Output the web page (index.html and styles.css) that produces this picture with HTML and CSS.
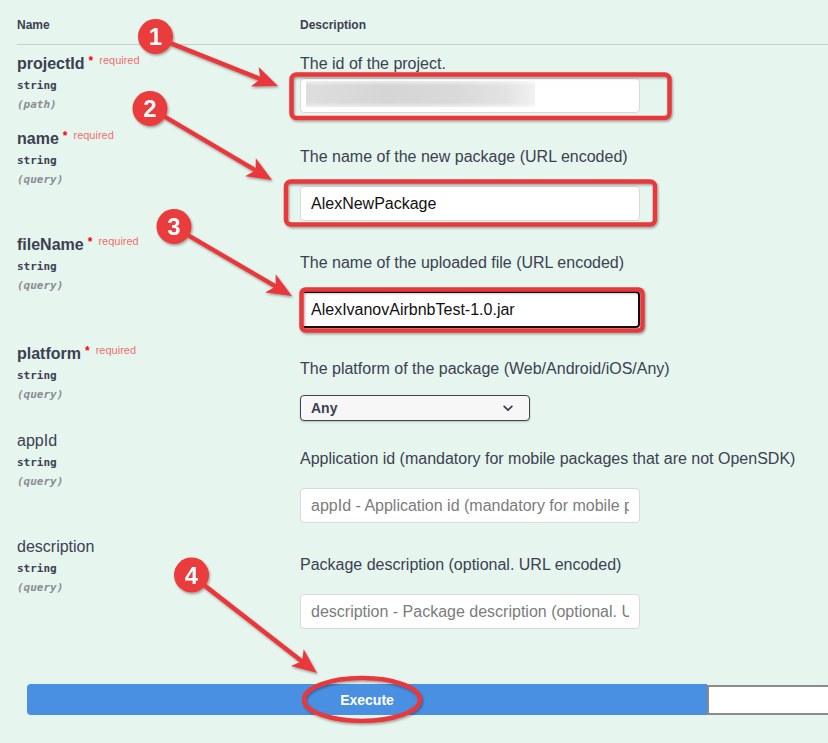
FILE: index.html
```html
<!DOCTYPE html>
<html lang="en">
<head>
<meta charset="utf-8">
<title>Parameters</title>
<link rel="stylesheet" href="styles.css">
</head>
<body>
<div class="page">
  <div class="params">
    <div class="thead">
      <div>Name</div>
      <div>Description</div>
    </div>

    <div class="row row--first">
      <div class="pname">
        <div class="title">projectId<span class="star">*</span><span class="reqtxt">required</span></div>
        <div class="type">string</div>
        <div class="in">(path)</div>
      </div>
      <div class="pdesc">
        <p>The id of the project.</p>
        <input class="field field--blurred" type="text" value="">
      </div>
    </div>

    <div class="row">
      <div class="pname">
        <div class="title">name<span class="star">*</span><span class="reqtxt">required</span></div>
        <div class="type">string</div>
        <div class="in">(query)</div>
      </div>
      <div class="pdesc">
        <p>The name of the new package (URL encoded)</p>
        <input class="field" type="text" value="AlexNewPackage">
      </div>
    </div>

    <div class="row row--focus">
      <div class="pname">
        <div class="title">fileName<span class="star">*</span><span class="reqtxt">required</span></div>
        <div class="type">string</div>
        <div class="in">(query)</div>
      </div>
      <div class="pdesc">
        <p>The name of the uploaded file (URL encoded)</p>
        <input class="field field--focus" type="text" value="AlexIvanovAirbnbTest-1.0.jar">
      </div>
    </div>

    <div class="row row--select">
      <div class="pname">
        <div class="title">platform<span class="star">*</span><span class="reqtxt">required</span></div>
        <div class="type">string</div>
        <div class="in">(query)</div>
      </div>
      <div class="pdesc">
        <p>The platform of the package (Web/Android/iOS/Any)</p>
        <div class="select">
          <span>Any</span>
          <svg class="chev" width="10" height="7" viewBox="0 0 10 7"><path d="M1.2 1.4 L5 5.2 L8.8 1.4" fill="none" stroke="#3b4151" stroke-width="1.8" stroke-linecap="round" stroke-linejoin="round"/></svg>
        </div>
      </div>
    </div>

    <div class="row">
      <div class="pname">
        <div class="title title--opt">appId</div>
        <div class="type">string</div>
        <div class="in">(query)</div>
      </div>
      <div class="pdesc">
        <p>Application id (mandatory for mobile packages that are not OpenSDK)</p>
        <input class="field" type="text" placeholder="appId - Application id (mandatory for mobile packages that are not OpenSDK)">
      </div>
    </div>

    <div class="row row--last">
      <div class="pname">
        <div class="title title--opt">description</div>
        <div class="type">string</div>
        <div class="in">(query)</div>
      </div>
      <div class="pdesc">
        <p>Package description (optional. URL encoded)</p>
        <input class="field" type="text" placeholder="description - Package description (optional. URL encoded)">
      </div>
    </div>
  </div>

  <div class="exec">
    <button class="btn-exec" type="button">Execute</button>
    <button class="btn-clear" type="button"></button>
  </div>

  <svg class="annot" width="828" height="743" viewBox="0 0 828 743">
    <defs>
      <filter id="sh" x="-20%" y="-20%" width="140%" height="140%">
        <feDropShadow dx="1" dy="1.5" stdDeviation="1" flood-color="#000" flood-opacity="0.35"/>
      </filter>
    </defs>
    <g filter="url(#sh)">
      <rect class="box" x="291.5" y="74.5" width="378" height="43.5" rx="5"/>
      <rect class="box" x="286" y="181.5" width="369" height="43" rx="5"/>
      <rect class="box" x="301.5" y="289.5" width="341" height="41" rx="4"/>
      <ellipse class="box" cx="362" cy="699.5" rx="58" ry="21.5"/>

      <g transform="translate(278 86) rotate(21.72)">
        <line class="shaft" x1="-132" y1="0" x2="-16" y2="0"/>
        <polygon class="head" points="0,0 -25,-10.5 -19,0 -25,10.5"/>
      </g>
      <g transform="translate(272 180) rotate(30.55)">
        <line class="shaft" x1="-141" y1="0" x2="-16" y2="0"/>
        <polygon class="head" points="0,0 -25,-10.5 -19,0 -25,10.5"/>
      </g>
      <g transform="translate(292 296) rotate(30.32)">
        <line class="shaft" x1="-136" y1="0" x2="-16" y2="0"/>
        <polygon class="head" points="0,0 -25,-10.5 -19,0 -25,10.5"/>
      </g>
      <g transform="translate(317 673) rotate(37.87)">
        <line class="shaft" x1="-159" y1="0" x2="-16" y2="0"/>
        <polygon class="head" points="0,0 -25,-10.5 -19,0 -25,10.5"/>
      </g>

      <g transform="translate(155.5 36.5)">
        <circle class="dot" r="17.5"/>
        <text class="num" y="8.5">1</text>
      </g>
      <g transform="translate(150 108.5)">
        <circle class="dot" r="17.5"/>
        <text class="num" y="8.5">2</text>
      </g>
      <g transform="translate(174 226.5)">
        <circle class="dot" r="17.5"/>
        <text class="num" y="8.5">3</text>
      </g>
      <g transform="translate(191.5 575)">
        <circle class="dot" r="17.5"/>
        <text class="num" y="8.5">4</text>
      </g>
    </g>
  </svg>
</div>
</body>
</html>
```

FILE: styles.css
```css
* {
  box-sizing: border-box;
}

html,
body {
  margin: 0;
  padding: 0;
}

body {
  background: #e6f5ee;
  font-family: "Liberation Sans", Arial, sans-serif;
  color: #3b4151;
  overflow: hidden;
}

.page {
  position: relative;
  width: 828px;
  height: 743px;
  overflow: hidden;
}

.params {
  padding-left: 17px;
}

.thead {
  display: grid;
  grid-template-columns: 283px 1fr;
  padding: 18px 0 11px;
  border-bottom: 1px solid #c4cfcc;
  margin-bottom: 8px;
  font-size: 12px;
  font-weight: 700;
  line-height: 15px;
}

.row {
  display: grid;
  grid-template-columns: 283px 1fr;
  align-items: start;
  padding-bottom: 13px;
}

.row--first {
  padding-bottom: 15px;
}

.row--focus {
  padding-bottom: 15px;
}

.row--select {
  padding-bottom: 9px;
}

.row--last {
  padding-bottom: 0;
}

.pname {
  padding-top: 1px;
}

.title {
  height: 20px;
  font-size: 16px;
  font-weight: 700;
  line-height: 20px;
  white-space: nowrap;
}

.title--opt {
  font-weight: 400;
}

.star {
  color: #ff0000;
  font-size: 12px;
  line-height: 0;
  margin-left: 4px;
  vertical-align: 4px;
}

.reqtxt {
  color: rgba(255, 0, 0, 0.6);
  font-size: 11px;
  font-weight: 400;
  line-height: 0;
  margin-left: 6px;
  vertical-align: 5px;
}

.type {
  font-family: "DejaVu Sans Mono", "Liberation Mono", monospace;
  font-size: 11px;
  font-weight: 700;
  line-height: 16px;
  margin-top: 4px;
  color: #3b4151;
}

.in {
  font-family: "DejaVu Sans Mono", "Liberation Mono", monospace;
  font-size: 11px;
  font-weight: 700;
  font-style: italic;
  line-height: 16px;
  margin-top: 3px;
  color: #8a8d93;
}

.pdesc p {
  margin: 18px 0 0;
  font-size: 16px;
  line-height: 22px;
  white-space: nowrap;
}

.row--first .pdesc p {
  margin-top: 0;
}

.row--select .pdesc p {
  margin-top: 15px;
}

.field {
  display: block;
  width: 340px;
  height: 35px;
  margin: 18px 0 0;
  padding: 0 10px;
  border: 1px solid #d9d9d9;
  border-radius: 4px;
  background: #fff;
  font-family: "Liberation Sans", Arial, sans-serif;
  font-size: 16px;
  color: #111;
  outline: none;
}

.field::placeholder {
  color: #7c7c7c;
  opacity: 1;
}

.row--first .field {
  margin-top: 3px;
}

.field--blurred {
  background:
    linear-gradient(180deg, rgba(255,255,255,0.55) 0%, rgba(255,255,255,0) 18%, rgba(255,255,255,0) 82%, rgba(255,255,255,0.55) 100%) no-repeat 5px 2px / 229px 26px,
    linear-gradient(90deg, #dedede 0%, #d5d5d5 35%, #d9d9d9 65%, #e3e3e3 88%, #f2f2f2 100%) no-repeat 5px 2px / 229px 26px,
    #fff;
}

.field--focus {
  height: 37px;
  margin-top: 17px;
  border: 2px solid #111;
  padding: 0 9px;
}

.select {
  display: flex;
  align-items: center;
  justify-content: space-between;
  width: 230px;
  height: 26px;
  margin-top: 15px;
  padding: 0 16px 0 10px;
  border: 1px solid #41444e;
  border-radius: 4px;
  background: #f7f7f7;
  box-shadow: 0 1px 2px 0 rgba(0, 0, 0, 0.2);
  font-size: 14px;
  font-weight: 700;
  color: #3b4151;
}

.chev {
  display: block;
}

.exec {
  display: flex;
  margin-top: 55px;
  padding-left: 27px;
}

.btn-exec {
  flex: 0 0 680px;
  height: 31px;
  border: none;
  border-radius: 4px 0 0 4px;
  background: #4990e2;
  color: #fff;
  font-family: "Liberation Sans", Arial, sans-serif;
  font-size: 14px;
  font-weight: 700;
  padding: 0;
}

.btn-clear {
  flex: 0 0 160px;
  height: 30px;
  margin-top: 1px;
  border: 2px solid #8a8a8a;
  border-right: none;
  background: #fff;
  padding: 0;
}

.annot {
  position: absolute;
  top: 0;
  left: 0;
  pointer-events: none;
}

.box {
  fill: none;
  stroke: #e8393b;
  stroke-width: 4.5;
}

.shaft {
  stroke: #e8393b;
  stroke-width: 4.5;
}

.head {
  fill: #e8393b;
}

.dot {
  fill: #ea3b3d;
}

.num {
  fill: #fff;
  font-family: "Liberation Sans", Arial, sans-serif;
  font-size: 24px;
  font-weight: 700;
  text-anchor: middle;
}
```
